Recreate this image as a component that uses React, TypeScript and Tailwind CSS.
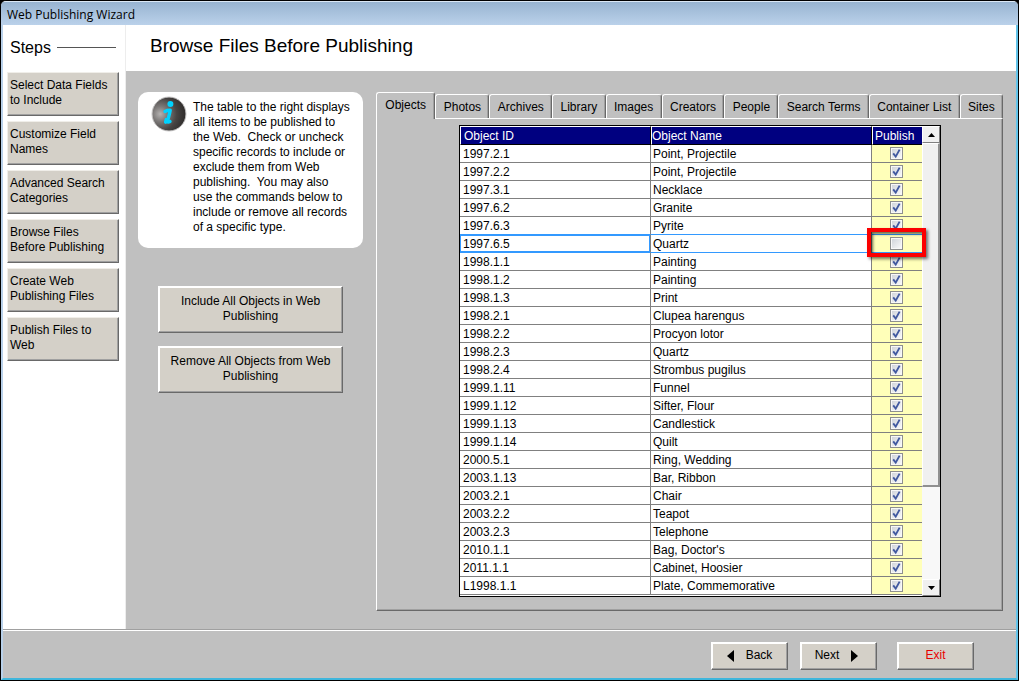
import { useState } from 'react';

const steps = [
  'Select Data Fields to Include',
  'Customize Field Names',
  'Advanced Search Categories',
  'Browse Files Before Publishing',
  'Create Web Publishing Files',
  'Publish Files to Web',
];

const tabs = [
  'Objects',
  'Photos',
  'Archives',
  'Library',
  'Images',
  'Creators',
  'People',
  'Search Terms',
  'Container List',
  'Sites',
];

const initialRecords = [
  { id: '1997.2.1', name: 'Point, Projectile', publish: true },
  { id: '1997.2.2', name: 'Point, Projectile', publish: true },
  { id: '1997.3.1', name: 'Necklace', publish: true },
  { id: '1997.6.2', name: 'Granite', publish: true },
  { id: '1997.6.3', name: 'Pyrite', publish: true },
  { id: '1997.6.5', name: 'Quartz', publish: false },
  { id: '1998.1.1', name: 'Painting', publish: true },
  { id: '1998.1.2', name: 'Painting', publish: true },
  { id: '1998.1.3', name: 'Print', publish: true },
  { id: '1998.2.1', name: 'Clupea harengus', publish: true },
  { id: '1998.2.2', name: 'Procyon lotor', publish: true },
  { id: '1998.2.3', name: 'Quartz', publish: true },
  { id: '1998.2.4', name: 'Strombus pugilus', publish: true },
  { id: '1999.1.11', name: 'Funnel', publish: true },
  { id: '1999.1.12', name: 'Sifter, Flour', publish: true },
  { id: '1999.1.13', name: 'Candlestick', publish: true },
  { id: '1999.1.14', name: 'Quilt', publish: true },
  { id: '2000.5.1', name: 'Ring, Wedding', publish: true },
  { id: '2003.1.13', name: 'Bar, Ribbon', publish: true },
  { id: '2003.2.1', name: 'Chair', publish: true },
  { id: '2003.2.2', name: 'Teapot', publish: true },
  { id: '2003.2.3', name: 'Telephone', publish: true },
  { id: '2010.1.1', name: "Bag, Doctor's", publish: true },
  { id: '2011.1.1', name: 'Cabinet, Hoosier', publish: true },
  { id: 'L1998.1.1', name: 'Plate, Commemorative', publish: true },
];

const selectedRow = 5;

const raised =
  'bg-[#d4d0c8] border border-t-white border-l-white border-r-[#696969] border-b-[#696969] shadow-[inset_-1px_-1px_0_#a0a0a0,inset_1px_1px_0_#fff]';

const raisedStep =
  'bg-[#d4d0c8] border border-t-[#f0eee9] border-l-[#f0eee9] border-r-[#696969] border-b-[#696969] shadow-[inset_-1px_-1px_0_#a0a0a0]';

function InfoIcon() {
  return (
    <svg viewBox="0 0 36 36" className="size-9 shrink-0" aria-hidden="true">
      <defs>
        <radialGradient id="ball" cx="0.24" cy="0.5" r="0.75">
          <stop offset="0" stopColor="#b4b2b1" />
          <stop offset="0.3" stopColor="#7b7877" />
          <stop offset="0.65" stopColor="#474443" />
          <stop offset="1" stopColor="#2f2c2b" />
        </radialGradient>
      </defs>
      <circle cx="18" cy="18" r="17" fill="url(#ball)" stroke="#c9c8c8" strokeWidth="1" />
      <circle cx="19.4" cy="8" r="3" fill="#00d2ff" />
      <path
        d="M14 15.4c1.6-.9 3.4-1.3 5.2-1.2-.6 3.8-1.8 7.2-2.6 10.8-.3 1.4.8 1.4 2.4.6"
        fill="none"
        stroke="#00d2ff"
        strokeWidth="3.4"
        strokeLinecap="round"
        strokeLinejoin="round"
      />
      <path d="M15.2 23.6l-.6 2.6" fill="none" stroke="#00d2ff" strokeWidth="3.4" strokeLinecap="round" />
    </svg>
  );
}

function PublishBox({ label, checked, onChange }: { label: string; checked: boolean; onChange: () => void }) {
  return (
    <label className="mx-[18px] grid size-[13px] place-items-center">
      <input
        type="checkbox"
        aria-label={label}
        checked={checked}
        onChange={onChange}
        className="peer col-start-1 row-start-1 size-[13px] appearance-none border border-[#8e8f8f] bg-linear-to-br from-[#cdd1d8] to-[#fcfcfc] shadow-[inset_0_0_0_1px_#f8f8f8]"
      />
      <svg viewBox="0 0 13 13" className="pointer-events-none invisible col-start-1 row-start-1 size-[13px] peer-checked:visible" aria-hidden="true">
        <path d="M3.2 6.4 5.7 9.6 9.6 2.6" fill="none" stroke="#4159a0" strokeWidth="1.9" />
      </svg>
    </label>
  );
}

function ScrollBar() {
  const button =
    'flex h-[17px] shrink-0 items-center justify-center border border-t-white border-l-white border-r-[#808080] border-b-[#808080] bg-[#f0f0f0]';
  return (
    <div className="flex w-[18px] shrink-0 flex-col bg-[#f8f8f8]">
      <button type="button" aria-label="Scroll up" className={button}>
        <svg viewBox="0 0 7 4" className="h-1 w-[7px]"><path d="M0 4h7L3.5 0z" /></svg>
      </button>
      <div className="min-h-0 flex-1">
        <div className="h-[79%] border-t border-r-2 border-b-2 border-l border-t-white border-l-white border-r-[#909090] border-b-[#909090] bg-[#f0f0f0]"></div>
      </div>
      <button type="button" aria-label="Scroll down" className={button}>
        <svg viewBox="0 0 7 4" className="h-1 w-[7px]"><path d="M0 0h7L3.5 4z" /></svg>
      </button>
    </div>
  );
}

export default function App() {
  const [activeTab, setActiveTab] = useState('Objects');
  const [records, setRecords] = useState(initialRecords);

  const toggle = (id: string) => {
    setRecords(records.map((r) => (r.id === id ? { ...r, publish: !r.publish } : r)));
  };

  const setAll = (publish: boolean) => {
    setRecords(records.map((r) => ({ ...r, publish })));
  };

  return (
    <div className="h-screen bg-black font-['Liberation_Sans',Arial,sans-serif] text-xs leading-[15px] text-black">
      <div className="flex h-full flex-col overflow-hidden rounded-t-md border border-black bg-[#c0c0c0]">
        {/* Title bar */}
        <div className="flex h-6 shrink-0 items-center border-t border-[#dbe8f5] bg-linear-to-b from-[#98b4d1] to-[#bad1ea] pt-0.5 pl-1.5">
          <span className="font-['Open_Sans','Noto_Sans',sans-serif] text-xs">Web Publishing Wizard</span>
        </div>

        <div className="flex min-h-0 flex-1 flex-col border-r-2 border-b-2 border-l-2 border-r-[#62c4ea] border-b-[#3fb6dc] border-l-[#b9d1ea]">
          <div className="flex min-h-0 flex-1 border-b border-[#a0a0a0]">
            {/* Steps */}
            <aside className="w-[123px] shrink-0 border-r border-[#ededed] bg-white pr-1.5 pl-1">
              <div className="flex h-[47px] items-center gap-1.5 pr-[3px] pb-0.5 pl-[3px]">
                <h2 className="text-base">Steps</h2>
                <div className="h-px flex-1 bg-[#555]"></div>
              </div>
              <nav className="flex flex-col gap-[5px]">
                {steps.map((step) => (
                  <button
                    key={step}
                    type="button"
                    className={`${raisedStep} flex h-11 items-start px-0.5 pt-[5px] text-left`}
                  >
                    {step}
                  </button>
                ))}
              </nav>
            </aside>

            <div className="flex min-w-0 flex-1 flex-col">
              <header className="flex h-[46px] shrink-0 items-center bg-white pb-1 pl-6">
                <h1 className="text-[19px] leading-6">Browse Files Before Publishing</h1>
              </header>

              <main className="flex min-h-0 flex-1 gap-[13px] pt-[21px] pr-[13px] pb-[18px] pl-3">
                <div className="w-[225px] shrink-0">
                  <div className="flex gap-1.5 rounded-[10px] bg-white pt-1 pr-2 pb-[13px] pl-[13px]">
                    <InfoIcon />
                    <p className="pt-1 whitespace-pre-wrap">
                      {'The table to the right displays all items to be published to the Web.  Check or uncheck specific records to include or exclude them from Web publishing.  You may also\nuse the commands below to include or remove all records of a specific type.'}
                    </p>
                  </div>
                  <div className="mt-[38px] flex flex-col gap-[13px] px-5">
                    <button type="button" onClick={() => setAll(true)} className={`${raised} h-[47px] px-1 pb-0.5`}>
                      Include All Objects in Web Publishing
                    </button>
                    <button type="button" onClick={() => setAll(false)} className={`${raised} h-[47px] px-1 pb-0.5`}>
                      Remove All Objects from Web Publishing
                    </button>
                  </div>
                </div>

                {/* Tabbed records */}
                <div className="flex min-w-0 flex-1 flex-col">
                  <div role="tablist" className="flex items-end">
                    {tabs.map((tab) => (
                      <button
                        key={tab}
                        type="button"
                        role="tab"
                        aria-selected={tab === activeTab}
                        onClick={() => setActiveTab(tab)}
                        className={`flex-auto rounded-t-[3px] border border-b-0 border-t-white border-r-[#696969] border-l-white bg-[#c0c0c0] shadow-[inset_-1px_0_0_#a0a0a0] ${
                          tab === activeTab ? 'relative z-10 -mb-px h-[27px] px-px pb-0.5' : 'h-6 pt-px'
                        }`}
                      >
                        {tab}
                      </button>
                    ))}
                  </div>
                  <div
                    role="tabpanel"
                    className="flex min-h-0 flex-1 flex-col border border-t-white border-r-[#696969] border-b-[#696969] border-l-white pt-1.5 pr-[61px] pb-[13px] pl-[82px] shadow-[inset_-1px_-1px_0_#a0a0a0]"
                  >
                    <div className="flex min-h-0 flex-1 overflow-hidden border border-black bg-white">
                      <div className="min-w-0 flex-1">
                        <table className="w-full table-fixed border-separate border-spacing-0">
                          <colgroup>
                            <col className="w-[191px]" />
                            <col />
                            <col className="w-[50px]" />
                          </colgroup>
                          <thead>
                            <tr className="bg-[#000080] text-left text-white">
                              <th className="h-[19px] border border-t-white border-r-black border-b-black border-l-white p-0 pt-0.5 pl-[3px] font-normal">Object ID</th>
                              <th className="border border-t-white border-r-black border-b-black border-l-white p-0 pt-0.5 font-normal">Object Name</th>
                              <th className="border border-r-0 border-t-white border-b-black border-l-white p-0 pt-0.5 pl-0.5 font-normal">Publish</th>
                            </tr>
                          </thead>
                          <tbody>
                            {records.map((r, i) => {
                              const line =
                                i === selectedRow || i === selectedRow - 1 ? 'border-b-[#3399ff]' : 'border-b-[#808080]';
                              return (
                                <tr key={r.id}>
                                  <td
                                    className={`h-[18px] border-r border-b border-r-[#808080] p-0 pt-0.5 pl-[3px] ${line} ${
                                      i === selectedRow ? 'shadow-[inset_0_0_0_1px_#3399ff]' : ''
                                    }`}
                                  >
                                    {r.id}
                                  </td>
                                  <td className={`border-r border-b border-r-[#808080] p-0 pt-0.5 pl-0.5 ${line}`}>{r.name}</td>
                                  <td className={`relative border-b bg-[#ffffb9] p-0 ${line}`}>
                                    <PublishBox label={`Publish ${r.id}`} checked={r.publish} onChange={() => toggle(r.id)} />
                                    {i === selectedRow && (
                                      <div className="pointer-events-none absolute -top-[7px] -right-1 -bottom-[5px] -left-[5px] z-10 border-4 border-[#fb0000] shadow-[2px_2px_3px_rgba(0,0,0,0.55),inset_2px_2px_3px_rgba(0,0,0,0.6)]"></div>
                                    )}
                                  </td>
                                </tr>
                              );
                            })}
                          </tbody>
                        </table>
                      </div>
                      <ScrollBar />
                    </div>
                  </div>
                </div>
              </main>
            </div>
          </div>

          <footer className="flex h-12 shrink-0 items-center justify-end border-t border-white pt-0.5 pr-[42px]">
            <button type="button" className={`${raised} mr-3 flex h-7 w-[77px] items-center justify-center gap-3`}>
              <svg viewBox="0 0 7 12" className="h-3 w-[7px]"><path d="M7 0v12L0 6z" /></svg>
              Back
            </button>
            <button type="button" className={`${raised} mr-5 flex h-7 w-[77px] items-center justify-center gap-3 pr-1`}>
              Next
              <svg viewBox="0 0 7 12" className="h-3 w-[7px]"><path d="M0 0v12l7-6z" /></svg>
            </button>
            <button type="button" className={`${raised} h-7 w-[77px] text-[#e80000]`}>
              Exit
            </button>
          </footer>
        </div>
      </div>
    </div>
  );
}
